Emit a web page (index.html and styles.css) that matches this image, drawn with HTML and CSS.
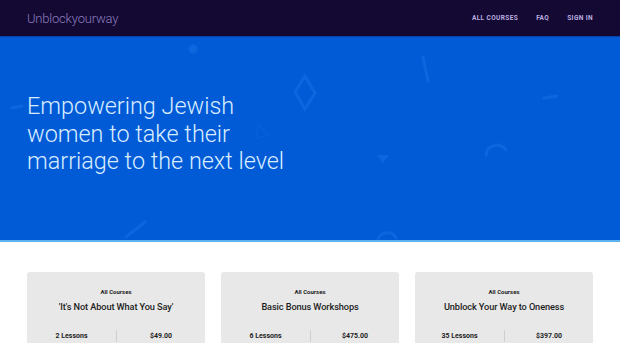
FILE: index.html
```html
<!DOCTYPE html>
<html lang="en">
<head>
<meta charset="UTF-8">
<title>Unblockyourway</title>
<link rel="stylesheet" href="styles.css">
</head>
<body>
<div class="header">
  <div class="header-logo">Unblockyourway</div>
  <div class="header-nav">
    <a href="#">All Courses</a>
    <a href="#">FAQ</a>
    <a href="#">Sign In</a>
  </div>
</div>
<div class="hero">
  <svg class="hero-shapes" width="620" height="203" viewBox="0 0 620 203">
    <g fill="none" stroke="#0e66df" stroke-width="3" stroke-linecap="round">
      <path d="M12 71 L22 69"/>
      <path d="M305 39 L315 56 L305 72 L295 55 Z"/>
      <path d="M423 20 L428 44"/>
      <path d="M544 61 L557 59"/>
      <path d="M486 118 A11 11 0 0 1 506 113"/>
      <path d="M126 200 L145 185"/>
      <path d="M378 202 A10 10 0 0 1 396 201"/>
      <path d="M258 87 L268 98 L256 102 Z" stroke="#085fda" stroke-width="1.5"/>
    </g>
    <g fill="#0e66df">
      <circle cx="193" cy="12" r="4.5"/>
      <path d="M377 118 L389 118 L383 126 Z"/>
    </g>
  </svg>
  <h1 class="hero-title">Empowering Jewish<br>women to take their<br>marriage to the next level</h1>
</div>
<div class="courses">
  <div class="card">
    <p class="card-label">All Courses</p>
    <p class="card-title">'It's Not About What You Say'</p>
    <div class="card-meta">
      <span>2 Lessons</span>
      <span>$49.00</span>
    </div>
  </div>
  <div class="card">
    <p class="card-label">All Courses</p>
    <p class="card-title">Basic Bonus Workshops</p>
    <div class="card-meta">
      <span>6 Lessons</span>
      <span>$475.00</span>
    </div>
  </div>
  <div class="card">
    <p class="card-label">All Courses</p>
    <p class="card-title">Unblock Your Way to Oneness</p>
    <div class="card-meta">
      <span>35 Lessons</span>
      <span>$397.00</span>
    </div>
  </div>
</div>
</body>
</html>
```
FILE: styles.css
```css
body {
  margin: 0;
  font-family: Roboto, "Liberation Sans", sans-serif;
  background: #fff;
}
.header {
  display: flex;
  align-items: center;
  justify-content: space-between;
  height: 36px;
  padding: 0 27px;
  background-color: #130933;
}
.header-logo {
  font-size: 13px;
  font-weight: 300;
  letter-spacing: -0.2px;
  color: #8d7bbd;
}
.header-nav {
  display: flex;
  gap: 18px;
}
.header-nav a {
  font-size: 6.5px;
  font-weight: 700;
  letter-spacing: 0.4px;
  text-transform: uppercase;
  text-decoration: none;
  color: #bcaee0;
}
.hero {
  position: relative;
  height: 203px;
  overflow: hidden;
  background-color: #015bd7;
  border-top: 1px solid #0b3ea6;
  border-bottom: 2px solid #5cb3f0;
}
.hero-shapes {
  position: absolute;
  top: 0;
  left: 0;
}
.hero-title {
  position: relative;
  margin: 0;
  padding: 56px 27px 0;
  font-size: 23.4px;
  font-weight: 300;
  line-height: 27.5px;
  color: #d9edff;
}
.courses {
  display: grid;
  grid-template-columns: repeat(3, 1fr);
  gap: 16px;
  padding: 30px 27px 0;
}
.card {
  background-color: #e8e8e8;
  border-radius: 3px;
  padding: 15px 0 10px;
  text-align: center;
  color: #1d1d1d;
}
.card p {
  margin: 0;
}
.card-label {
  font-size: 6px;
  font-weight: 700;
  line-height: 10px;
}
.card-title {
  margin-top: 3px !important;
  font-size: 9.2px;
  font-weight: 500;
  letter-spacing: -0.1px;
  line-height: 14px;
}
.card-meta {
  display: grid;
  grid-template-columns: 1fr 1fr;
  margin-top: 16px;
  font-size: 7px;
  font-weight: 700;
  line-height: 12px;
}
.card-meta span + span {
  border-left: 1px solid #cfcfcf;
}
```
